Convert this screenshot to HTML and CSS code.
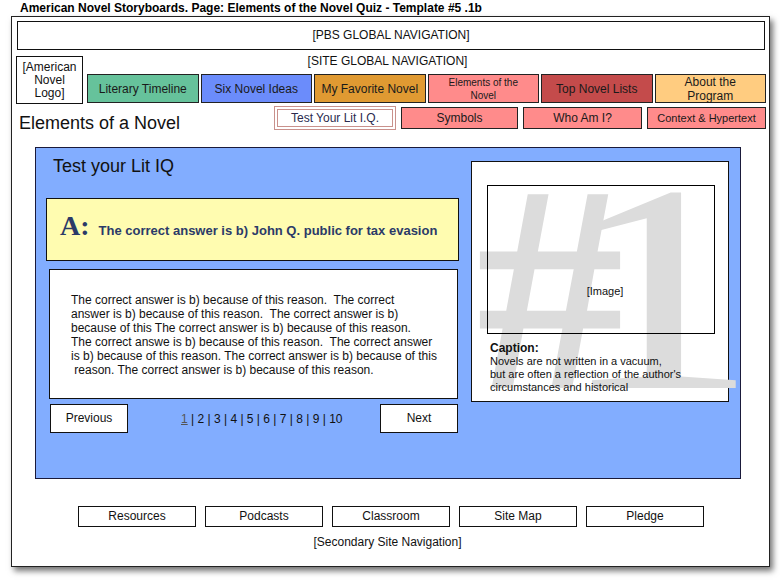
FILE: index.html
```
<!DOCTYPE html>
<html lang="en">
<head>
<meta charset="utf-8">
<title>American Novel Storyboards - Elements of the Novel Quiz</title>
<link rel="stylesheet" href="styles.css">
</head>
<body>
<div class="doc-title">American Novel Storyboards. Page: Elements of the Novel Quiz - Template #5 .1b</div>
<div class="frame">
  <div class="pbs-nav">[PBS GLOBAL NAVIGATION]</div>
  <div class="header">
    <div class="logo">[American<br>Novel<br>Logo]</div>
    <div class="site-label">[SITE GLOBAL NAVIGATION]</div>
    <nav class="main-nav">
      <a class="nav-btn c-green">Literary Timeline</a>
      <a class="nav-btn c-blue">Six Novel Ideas</a>
      <a class="nav-btn c-orange">My Favorite Novel</a>
      <a class="nav-btn c-pink small">Elements of the<br>Novel</a>
      <a class="nav-btn c-red">Top Novel Lists</a>
      <a class="nav-btn c-peach">About the<br>Program</a>
    </nav>
  </div>
  <div class="subrow">
    <h1 class="page-title">Elements of a Novel</h1>
    <nav class="sub-nav">
      <a class="sub-btn current">Test Your Lit I.Q.</a>
      <a class="sub-btn w-symbols">Symbols</a>
      <a class="sub-btn w-who">Who Am I?</a>
      <a class="sub-btn w-context">Context &amp; Hypertext</a>
    </nav>
  </div>
  <main class="panel">
    <div class="quiz">
      <h2 class="quiz-title">Test your Lit IQ</h2>
      <div class="answer"><span class="answer-a">A:</span><span class="answer-text">The correct answer is b) John Q. public for tax evasion</span></div>
      <div class="explain">The correct answer is b) because of this reason.  The correct
answer is b) because of this reason.  The correct answer is b)
because of this The correct answer is b) because of this reason.
The correct answe is b) because of this reason.  The correct answer
is b) because of this reason. The correct answer is b) because of this
 reason. The correct answer is b) because of this reason.</div>
      <div class="pager">
        <a class="pager-btn prev">Previous</a>
        <div class="pages"><a class="page-link">1</a> | 2 | 3 | 4 | 5 | 6 | 7 | 8 | 9 | 10</div>
        <a class="pager-btn next">Next</a>
      </div>
    </div>
    <aside class="media">
      <div class="watermark" aria-hidden="true"><span class="wm-hash">#</span><span class="wm-one">1</span></div>
      <div class="image-box">[Image]</div>
      <div class="caption"><b class="caption-head">Caption:</b>
        <div class="caption-body">Novels are not written in a vacuum,<br>but are often a reflection of the author's<br>circumstances and historical</div>
      </div>
    </aside>
  </main>
  <footer class="footer">
    <nav class="foot-nav">
      <a class="foot-btn">Resources</a>
      <a class="foot-btn">Podcasts</a>
      <a class="foot-btn">Classroom</a>
      <a class="foot-btn">Site Map</a>
      <a class="foot-btn">Pledge</a>
    </nav>
    <div class="foot-label">[Secondary Site Navigation]</div>
  </footer>
</div>
</body>
</html>
```
FILE: styles.css
```
* { box-sizing: border-box; }
html, body { margin: 0; padding: 0; background: #fff; }
body {
  font-family: "Liberation Sans", Arial, Helvetica, sans-serif;
  font-size: 12px;
  color: #111;
  width: 780px;
  height: 581px;
  overflow: hidden;
}
a { color: inherit; text-decoration: none; }

.doc-title {
  font-weight: bold;
  font-size: 12px;
  line-height: 15px;
  height: 16px;
  padding: 1px 0 0 20px;
  color: #000;
}

.frame {
  margin-left: 11px;
  width: 759px;
  height: 551px;
  border: 1px solid #222;
  background: #fff;
  box-shadow: 3px 4px 6px rgba(0,0,0,0.55);
  padding: 4px 3px 0 4px;
}

.pbs-nav {
  margin: 0 1px 0 1px;
  height: 29px;
  border: 1px solid #111;
  line-height: 27px;
  text-align: center;
}

.header {
  margin-top: 6px;
  display: grid;
  grid-template-columns: 67px 1fr;
  grid-template-rows: 18px 29px;
  column-gap: 4px;
}
.logo {
  grid-row: 1 / 3;
  grid-column: 1;
  height: 48px;
  border: 1px solid #111;
  display: flex;
  align-items: center;
  justify-content: center;
  text-align: center;
  line-height: 13px;
  position: relative;
  z-index: 1;
}
.site-label {
  grid-row: 1;
  grid-column: 1 / 3;
  text-align: center;
  line-height: 11px;
  padding-right: 7px;
}
.main-nav {
  grid-row: 2;
  grid-column: 2;
  display: flex;
  gap: 2px;
}
.nav-btn {
  flex: 1;
  border: 1px solid #222;
  display: flex;
  align-items: center;
  justify-content: center;
  text-align: center;
  line-height: 14px;
  color: #1a1a1a;
}
.nav-btn.small { font-size: 10px; line-height: 13px; }
.c-green { background: #66c29b; }
.c-blue { background: #6b8cfb; }
.c-orange { background: #e09a32; }
.c-pink { background: #ff8b8b; }
.c-red { background: #c44b4b; }
.c-peach { background: #ffcc80; }

.subrow {
  margin-top: 3px;
  display: flex;
  justify-content: space-between;
  align-items: flex-start;
}
.page-title {
  margin: 7px 0 0 3px;
  font-size: 18px;
  font-weight: normal;
  line-height: 21px;
}
.sub-nav {
  display: flex;
  gap: 5px;
  align-items: center;
  height: 24px;
}
.sub-btn {
  height: 22px;
  border: 1px solid #222;
  background: #ff8b8b;
  display: flex;
  align-items: center;
  justify-content: center;
  color: #1a1a1a;
}
.sub-btn.current {
  width: 122px;
  height: 24px;
  background: #fff;
  border: 1px solid #c9918c;
  box-shadow: inset 0 0 0 2px #fff, inset 0 0 0 3px #c9918c;
  color: #2a2a4e;
}
.w-symbols { width: 117px; }
.w-who { width: 119px; }
.w-context { width: 119px; font-size: 11px; }

.panel {
  margin: 13px 0 0 19px;
  width: 706px;
  height: 332px;
  border: 1px solid #1a1a3a;
  background: #82adff;
  display: flex;
  align-items: flex-start;
  padding: 0 11px 0 10px;
}
.quiz {
  width: 413px;
  flex: none;
}
.quiz-title {
  margin: 8px 0 0 7px;
  font-size: 18px;
  font-weight: normal;
  line-height: 21px;
}
.answer {
  margin-top: 21px;
  height: 63px;
  border: 1px solid #111;
  background: #fffcb0;
  display: flex;
  align-items: baseline;
  padding: 11px 0 0 13px;
  color: #2b3a68;
}
.answer-a {
  font-family: "Liberation Serif", "Times New Roman", serif;
  font-weight: bold;
  font-size: 28px;
  line-height: 32px;
  margin-right: 9px;
}
.answer-text {
  font-weight: bold;
  font-size: 13px;
  line-height: 16px;
}
.explain {
  margin: 8px 0 0 3px;
  width: 409px;
  height: 130px;
  border: 1px solid #111;
  background: #fff;
  padding: 23px 0 0 21px;
  line-height: 14px;
  white-space: pre;
}
.pager {
  margin-top: 5px;
  display: flex;
  align-items: center;
}
.pager-btn {
  width: 78px;
  height: 29px;
  border: 1px solid #111;
  background: #fff;
  text-align: center;
  line-height: 27px;
}
.pager-btn.prev { margin-left: 4px; }
.pager-btn.next { margin-left: auto; margin-right: 1px; }
.pages {
  margin-left: 53px;
  line-height: 14px;
  color: #111;
}
.page-link { text-decoration: underline; color: #555; }

.media {
  flex: none;
  margin: 13px 0 0 12px;
  width: 258px;
  height: 241px;
  border: 1px solid #111;
  background: #fff;
  position: relative;
  padding: 23px 13px 0 15px;
}
.watermark {
  position: absolute;
  left: 4px;
  top: -22px;
  font-family: "Liberation Serif", "Times New Roman", serif;
  font-size: 296px;
  line-height: 296px;
  color: #dcdcdc;
  white-space: nowrap;
  z-index: 0;
  pointer-events: none;
}
.wm-hash { font-weight: bold; }
.wm-one {
  display: inline-block;
  margin-left: -68px;
  transform: scaleX(1.38);
  transform-origin: left bottom;
}
.image-box {
  position: relative;
  z-index: 1;
  width: 228px;
  height: 149px;
  border: 1px solid #000;
  text-align: center;
  padding: 98px 0 0 8px;
  line-height: 14px;
  font-size: 11px;
}
.caption {
  position: relative;
  z-index: 1;
  margin: 8px 0 0 3px;
  line-height: 13px;
}
.caption-head { display: block; font-size: 12px; }
.caption-body { font-size: 11px; }

.footer { margin-top: 27px; }
.foot-nav {
  display: flex;
  justify-content: center;
  gap: 9px;
}
.foot-btn {
  width: 118px;
  height: 21px;
  border: 1px solid #111;
  text-align: center;
  line-height: 19px;
}
.foot-label {
  margin-top: 8px;
  text-align: center;
  line-height: 14px;
  padding-right: 7px;
}
```
